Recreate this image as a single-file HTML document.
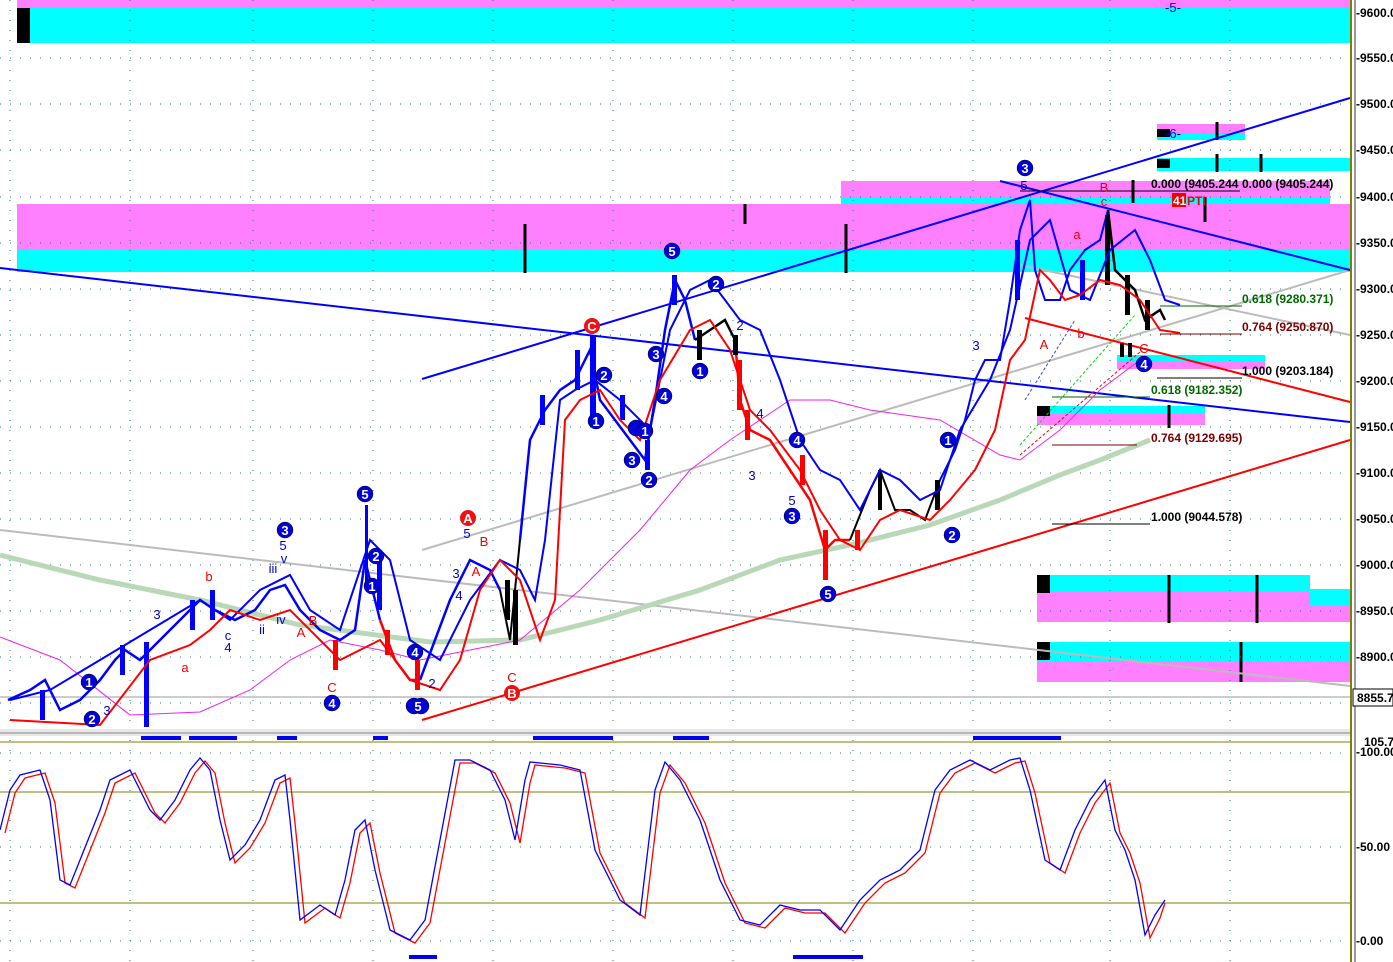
<!DOCTYPE html>
<html><head><meta charset="utf-8"><style>
html,body{margin:0;padding:0;background:#fff;}
svg{display:block;font-family:"Liberation Sans",sans-serif;}
</style></head><body>
<svg width="1393" height="962" viewBox="0 0 1393 962" xmlns="http://www.w3.org/2000/svg">
<rect width="1393" height="962" fill="#fff"/>
<!-- zones -->
<rect x="17" y="0" width="1333" height="8" fill="#ff80ff"/>
<rect x="17" y="8" width="1333" height="35" fill="#00ffff"/>
<rect x="17" y="8" width="13" height="35" fill="#000"/>
<rect x="17" y="204" width="1333" height="46" fill="#ff80ff"/>
<rect x="17" y="250" width="1333" height="22" fill="#00ffff"/>
<rect x="841" y="181" width="489" height="16" fill="#ff80ff"/>
<rect x="841" y="197" width="489" height="7" fill="#00ffff"/>
<rect x="1157" y="124" width="88" height="9" fill="#ff80ff"/>
<rect x="1157" y="133" width="88" height="7" fill="#00ffff"/>
<rect x="1157" y="129" width="13" height="8" fill="#000"/>
<rect x="1157" y="158" width="193" height="13" fill="#00ffff"/>
<rect x="1157" y="159" width="13" height="9" fill="#000"/>
<rect x="1117" y="355" width="148" height="7" fill="#00ffff"/>
<rect x="1117" y="362" width="148" height="7" fill="#ff80ff"/>
<rect x="1037" y="406" width="168" height="7" fill="#00ffff"/>
<rect x="1037" y="413" width="168" height="12" fill="#ff80ff"/>
<rect x="1037" y="406" width="13" height="10" fill="#000"/>
<rect x="1037" y="575" width="273" height="17" fill="#00ffff"/>
<rect x="1037" y="592" width="313" height="30" fill="#ff80ff"/>
<rect x="1310" y="589" width="40" height="16" fill="#00ffff"/>
<rect x="1037" y="575" width="13" height="18" fill="#000"/>
<rect x="1037" y="642" width="313" height="20" fill="#00ffff"/>
<rect x="1037" y="662" width="313" height="20" fill="#ff80ff"/>
<rect x="1037" y="642" width="13" height="18" fill="#000"/>
<g stroke="#000" stroke-width="3">
<line x1="525" y1="224" x2="525" y2="273"/><line x1="745" y1="204" x2="745" y2="224"/><line x1="846" y1="224" x2="846" y2="273"/>
<line x1="1217" y1="122" x2="1217" y2="140"/><line x1="1217" y1="154" x2="1217" y2="172"/><line x1="1261" y1="154" x2="1261" y2="172"/>
<line x1="1133" y1="180" x2="1133" y2="203"/><line x1="1205" y1="197" x2="1205" y2="222"/>
<line x1="1169" y1="405" x2="1169" y2="428"/><line x1="1169" y1="575" x2="1169" y2="623"/><line x1="1257" y1="575" x2="1257" y2="623"/><line x1="1241" y1="642" x2="1241" y2="682"/>
</g>
<!-- grid -->
<g stroke="#2a7a7a" stroke-width="1" stroke-dasharray="1,9">
<line x1="0" y1="58" x2="1350" y2="58"/><line x1="0" y1="104" x2="1350" y2="104"/><line x1="0" y1="150" x2="1350" y2="150"/><line x1="0" y1="197" x2="1350" y2="197"/><line x1="0" y1="243" x2="1350" y2="243"/><line x1="0" y1="289" x2="1350" y2="289"/><line x1="0" y1="335" x2="1350" y2="335"/><line x1="0" y1="381" x2="1350" y2="381"/><line x1="0" y1="427" x2="1350" y2="427"/><line x1="0" y1="473" x2="1350" y2="473"/><line x1="0" y1="519" x2="1350" y2="519"/><line x1="0" y1="565" x2="1350" y2="565"/><line x1="0" y1="611" x2="1350" y2="611"/><line x1="0" y1="657" x2="1350" y2="657"/><line x1="0" y1="703" x2="1350" y2="703"/>
<line x1="0" y1="753" x2="1350" y2="753"/><line x1="0" y1="847" x2="1350" y2="847"/><line x1="0" y1="941" x2="1350" y2="941"/>
<line x1="10" y1="0" x2="10" y2="962"/><line x1="130" y1="0" x2="130" y2="962"/><line x1="253" y1="0" x2="253" y2="962"/><line x1="373" y1="0" x2="373" y2="962"/><line x1="493" y1="0" x2="493" y2="962"/><line x1="613" y1="0" x2="613" y2="962"/><line x1="733" y1="0" x2="733" y2="962"/><line x1="853" y1="0" x2="853" y2="962"/><line x1="973" y1="0" x2="973" y2="962"/><line x1="1110" y1="0" x2="1110" y2="962"/><line x1="1230" y1="0" x2="1230" y2="962"/>
</g>
<!-- trend lines -->
<line x1="0" y1="530" x2="1350" y2="686" stroke="#bbb" stroke-width="2"/>
<line x1="422" y1="550" x2="1350" y2="270" stroke="#bbb" stroke-width="2"/>
<line x1="1020" y1="265" x2="1350" y2="335" stroke="#bbb" stroke-width="2"/>
<line x1="0" y1="697" x2="1350" y2="697" stroke="#999" stroke-width="1"/>
<polyline fill="none" stroke="#b8d8b8" stroke-width="5" points="0,555 100,580 200,600 300,625 430,642 520,640 600,620 700,590 780,560 850,545 930,525 1000,500 1060,475 1100,460 1150,440"/>
<line x1="422" y1="379" x2="1350" y2="98" stroke="#0000ff" stroke-width="2"/>
<line x1="0" y1="268" x2="1350" y2="422" stroke="#0000ff" stroke-width="2"/>
<line x1="1000" y1="181" x2="1350" y2="270" stroke="#0000ff" stroke-width="2"/>
<line x1="422" y1="720" x2="1350" y2="440" stroke="#ff0000" stroke-width="2"/>
<line x1="1025" y1="318" x2="1350" y2="402" stroke="#ff0000" stroke-width="2"/>
<line x1="1025" y1="400" x2="1075" y2="320" stroke="#4040ff" stroke-width="1" stroke-dasharray="3,2"/>
<line x1="1020" y1="445" x2="1135" y2="315" stroke="#00dd00" stroke-width="1" stroke-dasharray="3,2"/>
<line x1="1020" y1="455" x2="1140" y2="352" stroke="#ff0000" stroke-width="1" stroke-dasharray="3,2"/>
<g stroke-width="1">
<line x1="1020" y1="191" x2="1240" y2="191" stroke="#000"/>
<line x1="1160" y1="306" x2="1242" y2="306" stroke="#060"/>
<line x1="1160" y1="334" x2="1242" y2="334" stroke="#700"/>
<line x1="1157" y1="378" x2="1242" y2="378" stroke="#000"/>
<line x1="1052" y1="397" x2="1150" y2="397" stroke="#060"/>
<line x1="1052" y1="445" x2="1137" y2="445" stroke="#700"/>
<line x1="1052" y1="524" x2="1150" y2="524" stroke="#000"/>
</g>
<polyline fill="none" stroke="#ee22ee" stroke-width="1" points="0,637 60,660 130,715 200,712 250,690 290,660 330,640 380,650 420,660 470,650 520,640 580,590 640,530 690,470 730,440 790,400 830,400 870,410 940,420 1000,455 1020,460 1060,430 1100,390 1140,360"/>
<!-- price -->
<polyline fill="none" stroke="#0000ff" stroke-width="2.5" points="8,700 30,690 45,680 60,710 80,700 100,680 115,660 125,650 140,660 160,640 180,620 200,600 215,610 235,620 255,610 270,590 285,585 300,610 320,630 340,640 355,630 365,560 380,620"/>
<polyline fill="none" stroke="#ff0000" stroke-width="2.5" points="380,620 395,660 410,680 420,680"/>
<polyline fill="none" stroke="#0000ff" stroke-width="2.5" points="420,680 435,640 450,600 470,560 490,570 500,590"/>
<polyline fill="none" stroke="#000" stroke-width="2" points="500,590 510,640 520,540"/>
<polyline fill="none" stroke="#0000ff" stroke-width="2.5" points="520,540 530,440 545,410 560,390 575,380 590,350 600,400 615,420 630,440 645,460 655,400 665,330 675,280 685,300 695,340"/>
<polyline fill="none" stroke="#000" stroke-width="2.5" points="695,340 710,330 725,320 735,340"/>
<polyline fill="none" stroke="#ff0000" stroke-width="2.5" points="735,340 740,400 750,430 770,440 790,470 810,500 825,550 835,540 850,540"/>
<polyline fill="none" stroke="#000" stroke-width="2" points="850,540 870,490 880,470 895,510 910,510 925,520 940,480"/>
<polyline fill="none" stroke="#0000ff" stroke-width="2" points="940,480 955,450 965,420 975,380 985,360 1000,360 1010,300 1020,230 1030,200 1035,270 1045,300 1060,300 1070,270 1085,250 1100,240 1108,210"/>
<polyline fill="none" stroke="#000" stroke-width="2.5" points="1108,210 1115,270 1125,280 1135,290 1145,320 1160,310 1165,320"/>
<!-- candle bodies -->
<g fill="#0000ff">
<rect x="144" y="642" width="5" height="85"/><rect x="40" y="690" width="5" height="30"/><rect x="120" y="645" width="5" height="30"/><rect x="190" y="600" width="5" height="30"/><rect x="210" y="590" width="5" height="30"/><rect x="365" y="505" width="3" height="80"/><rect x="377" y="560" width="5" height="50"/><rect x="540" y="395" width="5" height="30"/><rect x="590" y="335" width="6" height="85"/><rect x="575" y="350" width="5" height="40"/><rect x="620" y="395" width="5" height="25"/><rect x="645" y="440" width="5" height="30"/><rect x="672" y="275" width="5" height="30"/><rect x="1015" y="240" width="5" height="60"/><rect x="1080" y="260" width="5" height="40"/></g>
<g fill="#000"><rect x="513" y="590" width="5" height="55"/><rect x="505" y="580" width="5" height="40"/><rect x="697" y="330" width="5" height="30"/><rect x="733" y="335" width="5" height="20"/><rect x="878" y="470" width="4" height="40"/><rect x="935" y="480" width="5" height="30"/><rect x="1105" y="215" width="5" height="70"/><rect x="1125" y="275" width="5" height="40"/><rect x="1145" y="300" width="5" height="30"/><rect x="1120" y="343" width="4" height="14"/><rect x="1128" y="343" width="4" height="14"/></g>
<g fill="#ff0000"><rect x="333" y="640" width="5" height="30"/><rect x="737" y="360" width="5" height="50"/><rect x="745" y="410" width="5" height="30"/><rect x="800" y="455" width="5" height="30"/><rect x="823" y="530" width="5" height="50"/><rect x="855" y="530" width="5" height="20"/><rect x="415" y="660" width="5" height="30"/><rect x="385" y="630" width="5" height="25"/></g>
<!-- bands -->
<polyline fill="none" stroke="#0000ff" stroke-width="2" points="10,700 50,690 100,660 150,630 200,600 230,620 260,590 290,575 310,610 340,630 370,540 390,560 410,640 440,660 470,600 500,560 520,570 535,600 545,540 560,400 575,390 595,380 620,400 650,430 670,330 690,290 710,280 740,320 760,330 780,380 800,440 820,470 840,480 860,510 880,470 900,480 920,500 940,490 960,430 990,380 1010,330 1030,240 1050,220 1070,290 1090,300 1110,250 1135,230 1150,260 1165,300 1180,305"/>
<polyline fill="none" stroke="#ff0000" stroke-width="2" points="10,720 100,725 150,660 190,645 210,630 230,610 260,620 290,610 320,640 340,660 380,640 410,680 440,690 460,660 480,590 500,560 520,580 540,640 555,600 565,420 580,400 600,390 620,420 640,440 660,380 690,330 710,320 730,350 750,410 770,430 800,470 820,510 840,540 860,550 880,520 900,510 930,520 950,500 975,470 995,430 1010,360 1025,340 1040,270 1050,280 1065,300 1080,295 1100,280 1120,285 1140,300 1160,330 1180,333"/>
<!-- wave labels circles -->
<g font-size="13" font-weight="bold" text-anchor="middle" fill="#fff">
<g fill="#0000dd" stroke="#000" stroke-width="0.5">
<circle cx="89" cy="682" r="8"/><circle cx="92" cy="719" r="8"/><circle cx="285" cy="530" r="8"/><circle cx="365" cy="494" r="8"/><circle cx="376" cy="556" r="8"/><circle cx="372" cy="586" r="8"/><circle cx="332" cy="703" r="8"/><circle cx="415" cy="652" r="8"/><circle cx="414" cy="706" r="8"/><circle cx="421" cy="706" r="8"/><circle cx="672" cy="251" r="8"/><circle cx="716" cy="284" r="8"/><circle cx="604" cy="375" r="8"/><circle cx="596" cy="421" r="8"/><circle cx="656" cy="354" r="8"/><circle cx="664" cy="396" r="8"/><circle cx="636" cy="428" r="8"/><circle cx="645" cy="431" r="8"/><circle cx="632" cy="460" r="8"/><circle cx="649" cy="480" r="8"/><circle cx="700" cy="371" r="8"/><circle cx="797" cy="440" r="8"/><circle cx="792" cy="516" r="8"/><circle cx="828" cy="594" r="8"/><circle cx="948" cy="440" r="8"/><circle cx="952" cy="535" r="8"/><circle cx="1025" cy="168" r="8"/><circle cx="1144" cy="364" r="8"/></g>
<circle cx="592" cy="326" r="8" fill="#ee1111"/><circle cx="468" cy="518" r="8" fill="#ee1111"/><circle cx="512" cy="693" r="8" fill="#ee1111"/>
<text x="89" y="687">1</text><text x="92" y="724">2</text><text x="285" y="535">3</text><text x="365" y="499">5</text><text x="376" y="561">2</text><text x="372" y="591">1</text><text x="332" y="708">4</text><text x="415" y="657">4</text><text x="418" y="711">5</text><text x="672" y="256">5</text><text x="716" y="289">2</text><text x="604" y="380">2</text><text x="596" y="426">1</text><text x="656" y="359">3</text><text x="664" y="401">4</text><text x="645" y="436">1</text><text x="632" y="465">3</text><text x="649" y="485">2</text><text x="700" y="376">1</text><text x="797" y="445">4</text><text x="792" y="521">3</text><text x="828" y="599">5</text><text x="948" y="445">1</text><text x="952" y="540">2</text><text x="1025" y="173">3</text><text x="1144" y="369">4</text>
<text x="592" y="331">C</text><text x="468" y="523">A</text><text x="512" y="698">B</text>
</g>
<g font-size="13" text-anchor="middle">
<g fill="#e00"><text x="209" y="581">b</text><text x="185" y="672">a</text><text x="313" y="625">B</text><text x="301" y="637">A</text><text x="332" y="692">C</text><text x="484" y="546">B</text><text x="476" y="576">A</text><text x="512" y="682">C</text><text x="1104" y="192">B</text><text x="1104" y="206">c</text><text x="1077" y="239">a</text><text x="1081" y="338">b</text><text x="1044" y="349">A</text><text x="1144" y="353">C</text></g>
<g fill="#00c"><text x="157" y="619">3</text><text x="228" y="640">c</text><text x="228" y="652">4</text><text x="273" y="573">iii</text><text x="283" y="550">5</text><text x="284" y="563">v</text><text x="262" y="634">ii</text><text x="281" y="624">iv</text><text x="467" y="538">5</text><text x="456" y="578">3</text><text x="459" y="600">4</text><text x="752" y="480">3</text><text x="792" y="505">5</text><text x="760" y="418">4</text><text x="976" y="350">3</text><text x="1024" y="190">5</text><text x="1173" y="12">-5-</text><text x="1173" y="138">-6-</text><text x="432" y="688">2</text><text x="107" y="715">3</text><text x="740" y="330">2</text></g>
</g>
<g font-size="12" font-weight="bold">
<text x="1151" y="188" fill="#000">0.000  (9405.244</text><text x="1242" y="188" fill="#000">0.000  (9405.244)</text>
<rect x="1172" y="193" width="14" height="14" fill="#e00"/><text x="1173" y="205" fill="#fff">41</text><text x="1187" y="205" fill="#e00">PTI</text>
<text x="1242" y="303" fill="#006600">0.618  (9280.371)</text>
<text x="1242" y="331" fill="#700">0.764  (9250.870)</text>
<text x="1242" y="375" fill="#000">1.000  (9203.184)</text>
<text x="1151" y="394" fill="#006600">0.618  (9182.352)</text>
<text x="1151" y="442" fill="#700">0.764  (9129.695)</text>
<text x="1151" y="521" fill="#000">1.000  (9044.578)</text>
</g>
<!-- separator -->
<rect x="0" y="729" width="1350" height="7" fill="#e8e8e8"/>
<line x1="0" y1="733" x2="1393" y2="733" stroke="#888" stroke-width="1"/>
<g fill="#0000ee">
<rect x="141" y="736" width="40" height="4"/><rect x="189" y="736" width="48" height="4"/><rect x="277" y="736" width="20" height="4"/><rect x="373" y="736" width="15" height="4"/><rect x="533" y="736" width="80" height="4"/><rect x="673" y="736" width="36" height="4"/><rect x="973" y="736" width="88" height="4"/>
<rect x="409" y="955" width="28" height="4"/><rect x="793" y="955" width="70" height="4"/>
</g>
<line x1="0" y1="742" x2="1350" y2="742" stroke="#808000" stroke-width="1"/>
<line x1="0" y1="792" x2="1350" y2="792" stroke="#808000" stroke-width="1"/>
<line x1="0" y1="903" x2="1350" y2="903" stroke="#808000" stroke-width="1"/>
<polyline fill="none" stroke="#ff0000" stroke-width="1.3" transform="translate(5,3)" points="0,830 10,790 20,775 40,770 50,800 60,880 70,885 80,860 100,810 110,780 130,770 150,810 160,820 175,800 190,770 200,758 210,770 220,820 230,860 245,845 260,820 275,780 285,775 290,820 300,920 320,905 335,915 345,880 355,830 365,820 375,870 390,930 410,940 425,920 440,840 455,760 470,760 490,770 505,800 515,840 525,780 530,762 560,765 580,770 595,850 620,900 640,915 655,790 665,762 680,780 700,820 720,880 740,920 760,925 780,905 800,910 820,910 840,930 860,900 880,880 900,870 920,850 935,790 950,770 970,760 990,770 1010,760 1020,758 1030,790 1045,860 1060,870 1075,830 1090,800 1105,780 1115,830 1125,850 1135,880 1145,935 1155,915 1160,900"/>
<polyline fill="none" stroke="#0000ff" stroke-width="1.3" points="0,830 10,790 20,775 40,770 50,800 60,880 70,885 80,860 100,810 110,780 130,770 150,810 160,820 175,800 190,770 200,758 210,770 220,820 230,860 245,845 260,820 275,780 285,775 290,820 300,920 320,905 335,915 345,880 355,830 365,820 375,870 390,930 410,940 425,920 440,840 455,760 470,760 490,770 505,800 515,840 525,780 530,762 560,765 580,770 595,850 620,900 640,915 655,790 665,762 680,780 700,820 720,880 740,920 760,925 780,905 800,910 820,910 840,930 860,900 880,880 900,870 920,850 935,790 950,770 970,760 990,770 1010,760 1020,758 1030,790 1045,860 1060,870 1075,830 1090,800 1105,780 1115,830 1125,850 1135,880 1145,935 1155,915 1165,900"/>
<!-- axis -->
<rect x="1350" y="0" width="43" height="962" fill="#fff"/>
<line x1="1351" y1="0" x2="1351" y2="962" stroke="#808000" stroke-width="2"/>
<line x1="1355" y1="0" x2="1355" y2="962" stroke="#333" stroke-width="1"/>
<g font-size="12" font-weight="bold" fill="#000">
<text x="1356" y="17">-9600.0</text><text x="1356" y="62">-9550.0</text><text x="1356" y="108">-9500.0</text><text x="1356" y="154">-9450.0</text><text x="1356" y="201">-9400.0</text><text x="1356" y="247">-9350.0</text><text x="1356" y="293">-9300.0</text><text x="1356" y="339">-9250.0</text><text x="1356" y="385">-9200.0</text><text x="1356" y="431">-9150.0</text><text x="1356" y="477">-9100.0</text><text x="1356" y="523">-9050.0</text><text x="1356" y="569">-9000.0</text><text x="1356" y="615">-8950.0</text><text x="1356" y="661">-8900.0</text>
<rect x="1353" y="689" width="40" height="17" fill="#fff" stroke="#000"/><text x="1357" y="702">8855.7</text>
<text x="1364" y="746">105.7</text><text x="1356" y="756">-100.00</text><text x="1356" y="851">-50.00</text><text x="1356" y="945">-0.00</text>
</g>
</svg>
</body></html>
